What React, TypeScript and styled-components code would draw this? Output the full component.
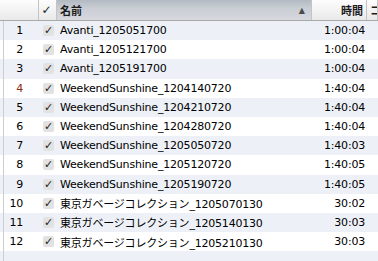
import styled, { createGlobalStyle } from 'styled-components';

const GlobalStyle = createGlobalStyle`
  html, body {
    margin: 0;
    padding: 0;
    background: #fff;
    overflow: hidden;
  }
  body {
    font-family: "DejaVu Sans", "Noto Sans CJK JP", sans-serif;
    font-size: 11px;
    color: #000;
  }
`;

const COLS = '39px 18px 255px 55px 1fr';

const Table = styled.div`
  width: 378px;
  height: 261px;
  overflow: hidden;
  display: flex;
  flex-direction: column;
`;

const HeaderRow = styled.div`
  display: grid;
  grid-template-columns: ${COLS};
  height: 20px;
  border-bottom: 1px solid #a9a9a9;
  flex-shrink: 0;
`;

const HeaderCell = styled.div<{ sorted?: boolean; align?: 'left' | 'right' | 'center' }>`
  display: flex;
  align-items: center;
  justify-content: ${({ align }) =>
    align === 'right' ? 'flex-end' : align === 'center' ? 'center' : 'flex-start'};
  padding: 0 3px;
  font-weight: bold;
  font-size: 11px;
  color: #1c1c1c;
  white-space: nowrap;
  overflow: hidden;
  border-right: 1px solid #c4c4c4;
  background: ${({ sorted }) =>
    sorted
      ? 'linear-gradient(#b3b9c2, #c9cdd4 40%, #d6d9de)'
      : 'linear-gradient(#fdfdfd, #f1f1f1 60%, #e9e9e9)'};
`;

const HeaderCheck = styled.span`
  font-size: 12px;
  margin-left: -2px;
`;

const SortArrow = styled.span`
  margin-left: auto;
  margin-right: 3px;
  font-size: 8px;
  color: #4a4a4a;
`;

const Body = styled.div`
  display: flex;
  flex-direction: column;
`;

const Row = styled.div<{ striped: boolean }>`
  display: grid;
  grid-template-columns: ${COLS};
  height: 19.2px;
  align-items: center;
  background-color: ${({ striped }) => (striped ? '#edf1f7' : '#ffffff')};
  background-image: linear-gradient(
    to right,
    transparent 3px,
    #cdcdcd 3px,
    #cdcdcd 4px,
    transparent 4px
  );
  letter-spacing: -0.2px;
  white-space: nowrap;
`;

const NumCell = styled.div<{ marked?: boolean }>`
  text-align: right;
  padding-right: 16px;
  color: ${({ marked }) => (marked ? '#8e2c12' : '#000')};
`;

const CheckCell = styled.div`
  display: flex;
  align-items: center;
  padding-left: 4px;
`;

const CheckBox = styled.span`
  width: 11px;
  height: 11px;
  border-radius: 2px;
  background: #e2e2e2;
  display: flex;
  align-items: center;
  justify-content: center;
  font-size: 11px;
  font-weight: bold;
  color: #1e1e1e;
  line-height: 1;
`;

const NameCell = styled.div`
  padding-left: 3px;
  overflow: hidden;
`;

const TimeCell = styled.div`
  text-align: right;
  padding-right: 2px;
`;

type Track = { name: string; time: string };

const tracks: Track[] = [
  { name: 'Avanti_1205051700', time: '1:00:04' },
  { name: 'Avanti_1205121700', time: '1:00:04' },
  { name: 'Avanti_1205191700', time: '1:00:04' },
  { name: 'WeekendSunshine_1204140720', time: '1:40:04' },
  { name: 'WeekendSunshine_1204210720', time: '1:40:04' },
  { name: 'WeekendSunshine_1204280720', time: '1:40:04' },
  { name: 'WeekendSunshine_1205050720', time: '1:40:03' },
  { name: 'WeekendSunshine_1205120720', time: '1:40:05' },
  { name: 'WeekendSunshine_1205190720', time: '1:40:05' },
  { name: '東京ガベージコレクション_1205070130', time: '30:02' },
  { name: '東京ガベージコレクション_1205140130', time: '30:03' },
  { name: '東京ガベージコレクション_1205210130', time: '30:03' },
];

export default function App() {
  return (
    <>
      <GlobalStyle />
      <Table>
        <HeaderRow>
          <HeaderCell />
          <HeaderCell align="center">
            <HeaderCheck>✓</HeaderCheck>
          </HeaderCell>
          <HeaderCell sorted>
            名前
            <SortArrow>▲</SortArrow>
          </HeaderCell>
          <HeaderCell align="right">時間</HeaderCell>
          <HeaderCell>コメント</HeaderCell>
        </HeaderRow>
        <Body>
          {tracks.map((t, i) => (
            <Row key={t.name} striped={i % 2 === 0}>
              <NumCell marked={i === 3}>{i + 1}</NumCell>
              <CheckCell>
                <CheckBox>✓</CheckBox>
              </CheckCell>
              <NameCell>{t.name}</NameCell>
              <TimeCell>{t.time}</TimeCell>
              <div />
            </Row>
          ))}
          <Row striped>
            <div />
          </Row>
        </Body>
      </Table>
    </>
  );
}
